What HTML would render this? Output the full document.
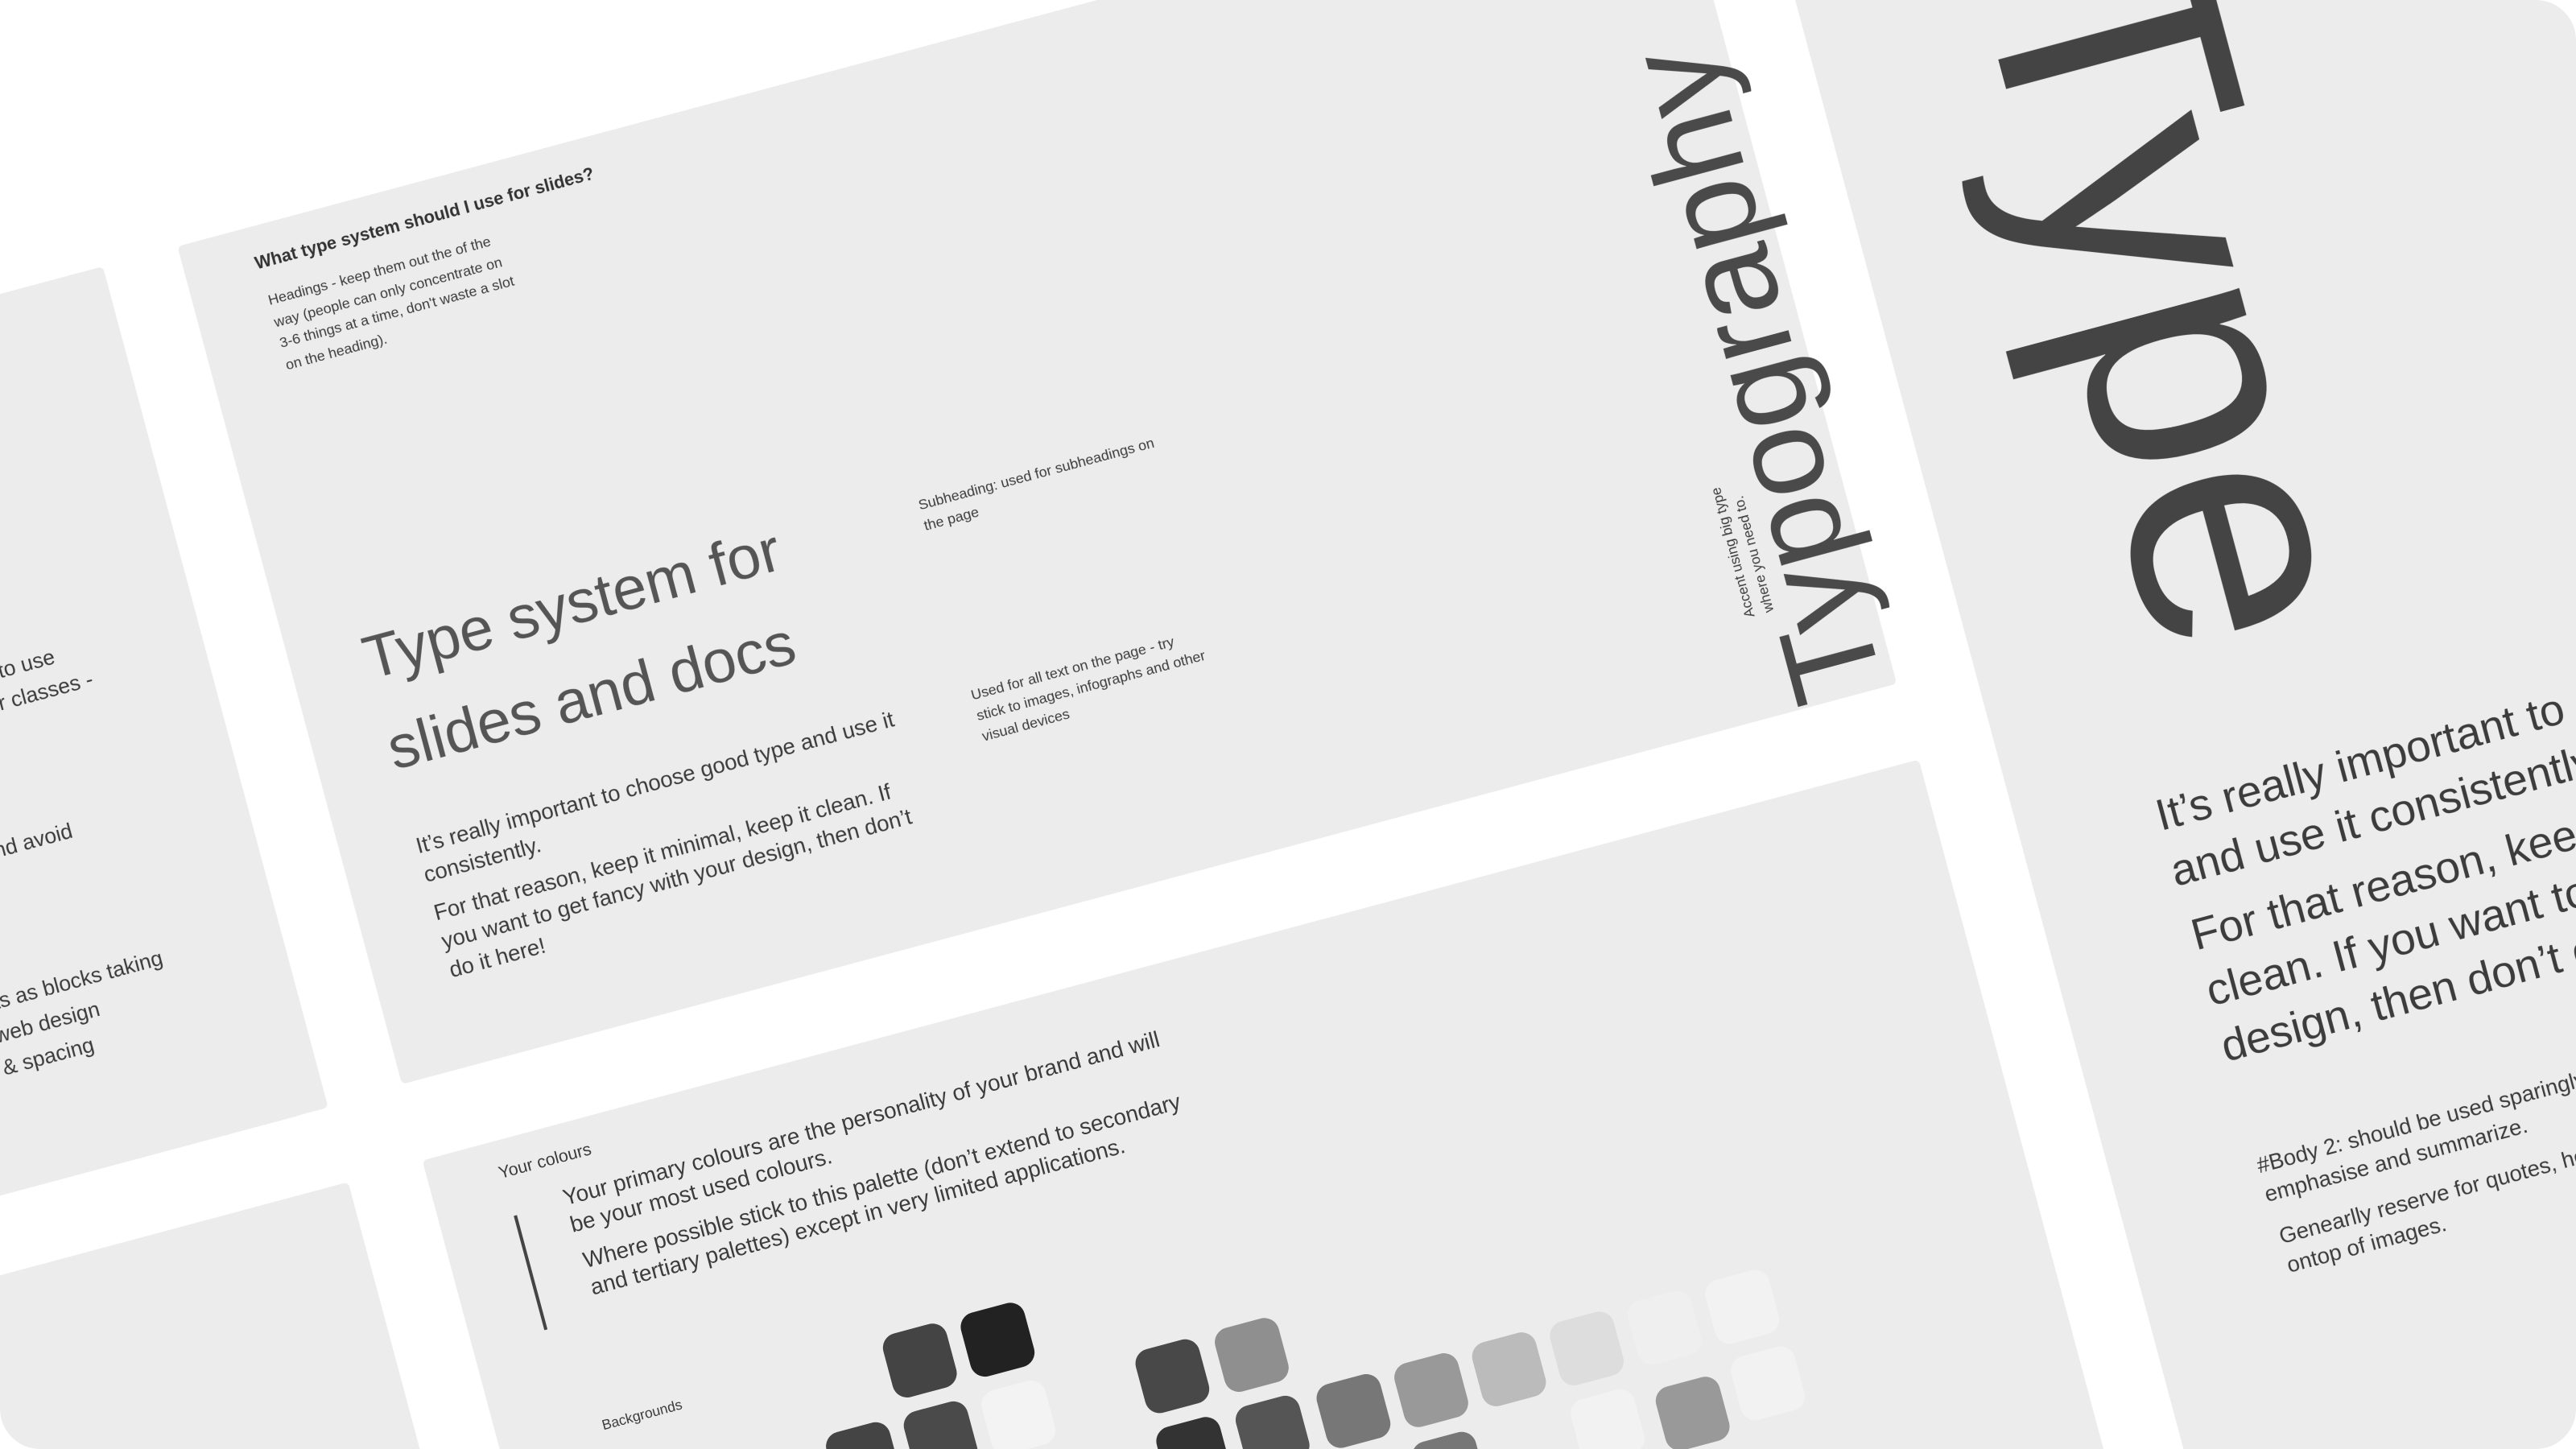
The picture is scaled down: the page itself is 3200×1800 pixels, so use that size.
<!DOCTYPE html>
<html><head><meta charset="utf-8"><style>
html,body{margin:0;padding:0;background:#fff;overflow:hidden;width:3200px;height:1800px;}
body{position:relative;}
#clip{position:absolute;left:0;top:0;width:3200px;height:1800px;overflow:hidden;border-radius:50px;background:#fff;}
#s{position:absolute;left:0;top:0;width:1568px;height:882px;transform:scale(2.040816);transform-origin:0 0;}
#f{position:absolute;left:108px;top:150px;width:0;height:0;transform:rotate(-15deg);transform-origin:0 0;}
.p{position:absolute;background:#ececec;border-radius:3px;}
.t{position:absolute;font-family:"Liberation Sans",sans-serif;color:#3c3c3c;white-space:nowrap;}
.sw{position:absolute;width:40px;height:40px;border-radius:9px;}
</style></head><body><div id="clip"><div id="s"><div id="f">

<!-- left panels -->
<div class="p" style="left:-1000px;top:0;width:953px;height:530px;">
  <div class="t" style="right:90px;top:214px;font-size:13px;">Decide when to use</div>
  <div class="t" style="right:71px;top:233px;font-size:13px;">headers or other classes -</div>
  <div class="t" style="right:107px;top:319px;font-size:13px;">Try and avoid</div>
  <div class="t" style="right:74px;top:408px;font-size:13px;">Think of elements as blocks taking</div>
  <div class="t" style="right:119px;top:428px;font-size:13px;">space like web design</div>
  <div class="t" style="right:128px;top:448px;font-size:13px;">padding &amp; spacing</div>
</div>
<div class="p" style="left:-1000px;top:577px;width:953px;height:900px;"></div>

<!-- middle panel -->
<div class="p" style="left:0;top:0;width:942px;height:528px;">
  <div class="t" style="left:43px;top:17px;font-size:10.7px;font-weight:bold;color:#333;">What type system should I use for slides?</div>
  <div class="t" style="left:45px;top:40px;font-size:8.8px;line-height:13.5px;">Headings - keep them out the of the<br>way (people can only concentrate on<br>3-6 things at a time, don't waste a slot<br>on the heading).</div>
  <div class="t" style="left:395px;top:263px;font-size:8.8px;line-height:13px;">Subheading: used for subheadings on<br>the page</div>
  <div class="t" style="left:45px;top:244px;font-size:37px;line-height:57px;color:#555;">Type system for<br>slides and docs</div>
  <div class="t" style="left:46px;top:382px;font-size:13.5px;line-height:18px;">It’s really important to choose good type and use it<br>consistently.</div>
  <div class="t" style="left:46px;top:424px;font-size:13.5px;line-height:18px;">For that reason, keep it minimal, keep it clean. If<br>you want to get fancy with your design, then don’t<br>do it here!</div>
  <div class="t" style="left:396px;top:383px;font-size:8.8px;line-height:13px;">Used for all text on the page - try<br>stick to images, infographs and other<br>visual devices</div>
  <div class="t" style="left:907px;top:324px;font-size:78px;line-height:78px;color:#4a4a4a;transform:translate(-50%,-50%) rotate(-90deg);">Typography</div>
  <div class="t" style="left:872px;top:425px;font-size:8.6px;line-height:12px;transform:translate(-50%,-50%) rotate(-90deg);">Accent using big type<br>where you need to.</div>
</div>

<!-- bottom panel -->
<div class="p" style="left:0;top:576px;width:943px;height:900px;">
  <div class="t" style="left:43px;top:14px;font-size:10.5px;">Your colours</div>
  <div style="position:absolute;left:45px;top:47px;width:1.5px;height:72px;background:#444;"></div>
  <div class="t" style="left:77px;top:36px;font-size:13.7px;line-height:17px;">Your primary colours are the personality of your brand and will<br>be your most used colours.</div>
  <div class="t" style="left:79px;top:76px;font-size:13.7px;line-height:17px;">Where possible stick to this palette (don’t extend to secondary<br>and tertiary palettes) except in very limited applications.</div>
  <div class="t" style="left:64px;top:179px;font-size:8.6px;">Backgrounds</div>
  <div class="sw" style="left:241px;top:176px;background:#444;"></div>
  <div class="sw" style="left:290px;top:176px;background:#222;"></div>
  <div class="sw" style="left:192px;top:225px;background:#444;"></div>
  <div class="sw" style="left:241px;top:225px;background:#4a4a4a;"></div>
  <div class="sw" style="left:290px;top:225px;background:#f3f3f3;"></div>
  <div class="sw" style="left:387px;top:225px;background:#484848;"></div>
  <div class="sw" style="left:437px;top:225px;background:#8f8f8f;"></div>
  <div class="sw" style="left:387px;top:274px;background:#333;"></div>
  <div class="sw" style="left:437px;top:274px;background:#555;"></div>
  <div class="sw" style="left:488px;top:274px;background:#777;"></div>
  <div class="sw" style="left:537px;top:274px;background:#999;"></div>
  <div class="sw" style="left:586px;top:274px;background:#bbb;"></div>
  <div class="sw" style="left:635px;top:274px;background:#ddd;"></div>
  <div class="sw" style="left:684px;top:274px;background:#efefef;"></div>
  <div class="sw" style="left:733px;top:274px;background:#f2f2f2;"></div>
  <div class="sw" style="left:535px;top:323px;background:#777;"></div>
  <div class="sw" style="left:635px;top:323px;background:#f2f2f2;"></div>
  <div class="sw" style="left:687px;top:329px;background:#999;"></div>
  <div class="sw" style="left:736px;top:323px;background:#f2f2f2;"></div>
</div>

<!-- right panel -->
<div class="p" style="left:990px;top:-700px;width:1000px;height:2300px;">
  <div class="t" style="left:178px;top:1042px;font-size:200px;line-height:200px;color:#444;transform:translate(-50%,-50%) rotate(90deg);">Type</div>
  <div class="t" style="left:250px;top:800px;font-size:10px;transform:rotate(90deg);transform-origin:0 0;">Keep it</div>
  <div class="t" style="left:84px;top:1330px;font-size:27px;line-height:35px;">It’s really important to choose good type<br>and use it consistently.</div>
  <div class="t" style="left:86px;top:1406px;font-size:27px;line-height:35px;">For that reason, keep it minimal, keep it<br>clean. If you want to get fancy with your<br>design, then don’t do it here!</div>
  <div class="t" style="left:88px;top:1560px;font-size:13.5px;line-height:18px;">#Body 2: should be used sparingly to<br>emphasise and summarize.</div>
  <div class="t" style="left:90px;top:1605px;font-size:13.5px;line-height:18px;">Genearlly reserve for quotes, headlines<br>ontop of images.</div>
</div>

</div></div></div></body></html>
